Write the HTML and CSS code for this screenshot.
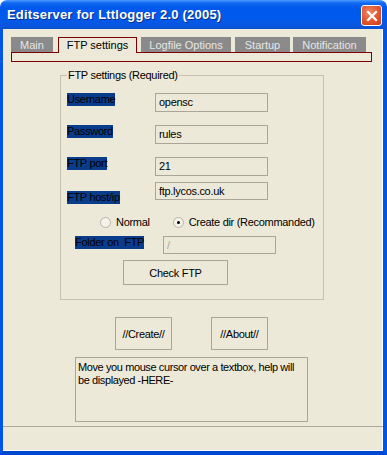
FILE: index.html
```html
<!DOCTYPE html>
<html lang="en">

<head>
  <meta charset="UTF-8">
  <title>Editserver for Lttlogger 2.0 (2005)</title>
  <link rel="stylesheet" href="styles.css">
</head>

<body>
  <div class="window">
    <div class="titlebar">
      <span class="title">Editserver for Lttlogger 2.0 (2005)</span>
      <button class="close-btn" aria-label="Close">
        <svg width="12" height="12" viewBox="0 0 12 12">
          <path d="M2 2 L10 10 M10 2 L2 10" stroke="#fff" stroke-width="2.2" stroke-linecap="square" />
        </svg>
      </button>
    </div>

    <div class="frame">
      <div class="client">
        <div class="tabs">
          <div class="tab tab-main">Main</div>
          <div class="tab tab-ftp active">FTP settings</div>
          <div class="tab tab-log">Logfile Options</div>
          <div class="tab tab-start">Startup</div>
          <div class="tab tab-notify">Notification</div>
        </div>
        <div class="tab-panel"></div>

        <div class="group">
          <span class="group-title">FTP settings (Required)</span>

          <div class="row row-user">
            <span class="label">Username</span>
            <div class="textbox">opensc</div>
          </div>
          <div class="row row-pass">
            <span class="label">Password</span>
            <div class="textbox">rules</div>
          </div>
          <div class="row row-port">
            <span class="label">FTP port</span>
            <div class="textbox">21</div>
          </div>
          <div class="row row-host">
            <span class="label">FTP host/ip</span>
            <div class="textbox">ftp.lycos.co.uk</div>
          </div>

          <div class="radios">
            <label class="radio"><span class="dot"></span>Normal</label>
            <label class="radio checked"><span class="dot"></span>Create dir (Recommanded)</label>
          </div>

          <div class="row row-folder">
            <span class="label">Folder on&nbsp; FTP</span>
            <div class="textbox disabled">/</div>
          </div>

          <div class="check-row">
            <button class="btn check-btn">Check FTP</button>
          </div>
        </div>

        <div class="actions">
          <button class="btn action-btn">//Create//</button>
          <button class="btn action-btn">//About//</button>
        </div>

        <div class="help">Move you mouse cursor over a textbox, help will be displayed -HERE-</div>
      </div>
      <div class="statusbar"></div>
    </div>
  </div>
</body>

</html>
```

FILE: styles.css
```css
body {
  margin: 0;
  padding: 0;
  background: #ffffff;
  font-family: "Liberation Sans", Arial, sans-serif;
  font-size: 11px;
  letter-spacing: -0.3px;
  color: #000;
}

.window {
  width: 387px;
  height: 455px;
  display: flex;
  flex-direction: column;
  overflow: hidden;
}

.titlebar {
  height: 29px;
  flex-shrink: 0;
  display: flex;
  align-items: flex-start;
  justify-content: space-between;
  border-radius: 7px 7px 0 0;
  background: linear-gradient(#4a9cff 0, #1068f2 3px, #0058ec 8px, #005aee 60%, #0a56de 90%, #0b4fcf 100%);
}

.title {
  margin: 7px 0 0 7px;
  color: #fff;
  font-weight: bold;
  font-size: 13px;
  letter-spacing: 0.2px;
  line-height: 16px;
  text-shadow: 1px 1px 0 #0a2f8a;
}

.close-btn {
  margin: 5px 5px 0 0;
  width: 21px;
  height: 21px;
  padding: 0;
  border: 1px solid #fff;
  border-radius: 3px;
  background: radial-gradient(circle at 40% 35%, #f08a6a 0, #e2552d 55%, #c63d17 100%);
  display: flex;
  align-items: center;
  justify-content: center;
}

.frame {
  flex: 1;
  display: flex;
  flex-direction: column;
  background: #ece9d8;
  border-left: 3px solid #0054e6;
  border-right: 4px solid #0054e6;
  border-bottom: 4px solid #0047d0;
  box-shadow: inset -1px -1px 0 #ffffff;
}

.client {
  flex: 1;
  padding: 8px 0 0 8px;
  display: flex;
  flex-direction: column;
  align-items: flex-start;
}

/* tabs */
.tabs {
  display: flex;
  align-items: flex-start;
  height: 15px;
  position: relative;
  z-index: 1;
}

.tab {
  height: 15px;
  line-height: 16px;
  text-align: center;
  background: #8a8a8a;
  color: #e6e6e6;
  font-size: 11px;
  letter-spacing: 0;
  box-sizing: border-box;
}

.tab-main {
  width: 42px;
  margin-right: 5px;
}

.tab-ftp {
  width: 79px;
  margin-right: 4px;
}

.tab-log {
  width: 90px;
  margin-right: 4px;
}

.tab-start {
  width: 55px;
  margin-right: 3px;
}

.tab-notify {
  width: 73px;
}

.tab.active {
  height: 16px;
  background: #ece9d8;
  color: #000;
  border: 1px solid #7b0000;
  border-bottom: none;
  line-height: 15px;
}

.tab-panel {
  width: 361px;
  height: 10px;
  box-sizing: border-box;
  border: 1px solid #7b0000;
}

/* group box */
.group {
  margin: 13px 0 0 49px;
  width: 264px;
  box-sizing: border-box;
  border: 1px solid #c5c2b2;
  padding: 0 0 14px 6px;
}

.group-title {
  display: block;
  width: fit-content;
  margin: -7px 0 0 0;
  padding: 0 1px;
  line-height: 13px;
  background: #ece9d8;
}

.row {
  display: flex;
  align-items: flex-start;
}

.row .label {
  display: block;
  line-height: 13px;
  background: #0a3c8c;
  margin-right: auto;
}

.row-user,
.row-pass,
.row-port,
.row-host {
  width: 201px;
}

.row-user {
  margin-top: 11px;
}

.row-pass,
.row-port {
  margin-top: 13px;
}

.row-host {
  margin-top: 6px;
}

.row-host .label {
  margin-top: 9px;
}

.textbox {
  width: 113px;
  height: 19px;
  box-sizing: border-box;
  border: 1px solid #a9a697;
  padding: 0 3px;
  line-height: 17px;
  background: #ece9d8;
}

.row-host .textbox {
  height: 18px;
  line-height: 16px;
}

.textbox.disabled {
  color: #a9a697;
  height: 18px;
  line-height: 16px;
}

.radios {
  display: flex;
  margin: 12px 0 0 33px;
  line-height: 13px;
}

.radio {
  display: flex;
  align-items: center;
}

.radio:first-child {
  margin-right: 23px;
}

.dot {
  width: 11px;
  height: 11px;
  box-sizing: border-box;
  border: 1px solid #b7b4a6;
  border-radius: 50%;
  background: #f4f2ea;
  margin-right: 5px;
  display: flex;
  align-items: center;
  justify-content: center;
}

.radio.checked .dot::after {
  content: "";
  width: 3px;
  height: 3px;
  background: #000;
  border-radius: 50%;
}

.row-folder {
  margin: 7px 0 0 8px;
  width: 201px;
}

.check-row {
  margin: 6px 0 0 56px;
}

.btn {
  font-family: "Liberation Sans", Arial, sans-serif;
  font-size: 11px;
  letter-spacing: -0.3px;
  background: #ece9d8;
  border: 1px solid #a9a697;
  color: #000;
  padding: 0;
}

.check-btn {
  width: 105px;
  height: 25px;
}

.actions {
  display: flex;
  gap: 39px;
  margin: 17px 0 0 104px;
}

.action-btn {
  width: 57px;
  height: 33px;
}

.help {
  margin: 7px 0 0 64px;
  width: 233px;
  height: 65px;
  box-sizing: border-box;
  border: 1px solid #a9a697;
  padding: 3px 8px 3px 2px;
  line-height: 13px;
  letter-spacing: -0.4px;
}

.statusbar {
  height: 24px;
  flex-shrink: 0;
  border-top: 1px solid #aca899;
}
```
